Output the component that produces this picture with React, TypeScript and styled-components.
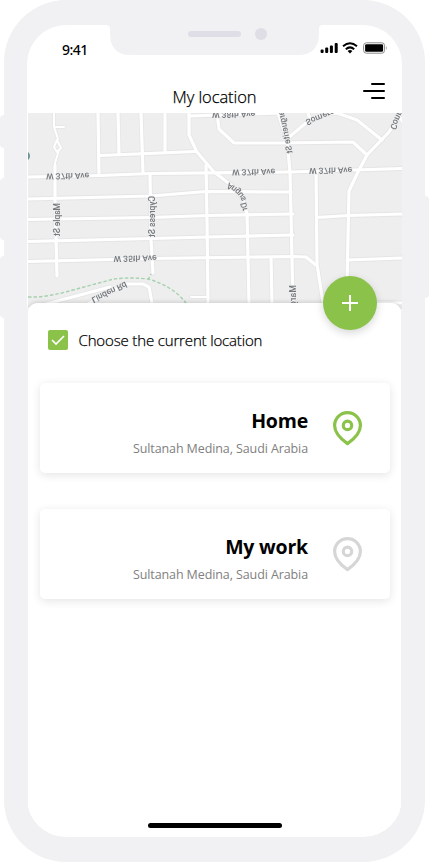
import React from "react";
import styled, { createGlobalStyle } from "styled-components";

const GREEN = "#8bc34a";
const SHELL = "#f1f1f4";

const GlobalStyle = createGlobalStyle`
  * { box-sizing: border-box; }
  body { margin: 0; background: #fff; overflow: hidden; }
  h1, h2, p { margin: 0; }
  button { border: 0; padding: 0; background: none; }
`;

const Page = styled.main`
  position: relative;
  width: 429px;
  height: 862px;
  padding: 0 4px;
  font-family: "Open Sans", "Noto Sans", sans-serif;
  color: #000;
`;

const SideKey = styled.span<{ $side: "left" | "right"; $top: number; $height: number }>`
  position: absolute;
  ${(p) => p.$side}: 0;
  top: ${(p) => p.$top}px;
  width: 8px;
  height: ${(p) => p.$height}px;
  border-radius: 4px;
  background: ${SHELL};
`;

const Shell = styled.div`
  position: relative;
  height: 862px;
  padding: 25px 23px;
  border-radius: 62px;
  background: ${SHELL};
`;

const Screen = styled.div`
  position: relative;
  display: flex;
  flex-direction: column;
  height: 812px;
  border-radius: 39px;
  background: #fff;
  overflow: hidden;
`;

const NotchArt = styled.svg`
  position: absolute;
  left: 79px;
  top: 0;
  display: block;
`;

const StatusBar = styled.div`
  display: flex;
  justify-content: space-between;
  height: 45px;
  padding: 14px 14px 0 35px;
`;

const Clock = styled.span`
  font-family: "Noto Sans", sans-serif;
  font-size: 14px;
  font-weight: 500;
  line-height: 21px;
  letter-spacing: -0.5px;
`;

const StatusIcons = styled.svg`
  display: block;
  margin-top: 2px;
`;

const Header = styled.header`
  display: grid;
  grid-template-columns: 40px 1fr 40px;
  height: 43px;
`;

const Title = styled.h1`
  grid-column: 2;
  padding-top: 15px;
  font-size: 16.5px;
  font-weight: 300;
  line-height: 24px;
  letter-spacing: -0.08px;
  text-align: center;
  -webkit-text-stroke: 0.25px #000;
`;

const MenuButton = styled.button`
  display: flex;
  flex-direction: column;
  align-items: flex-end;
  gap: 5px;
  padding: 13px 17px 0 0;
`;

const MenuLine = styled.span<{ $width: number }>`
  flex: none;
  width: ${(p) => p.$width}px;
  height: 2px;
  border-radius: 1px;
  background: #000;
`;

const MapArea = styled.div`
  height: 190px;
  padding-left: 1px;
`;

const MapArt = styled.svg`
  display: block;
  filter: blur(0.3px);
`;

const Sheet = styled.section`
  position: relative;
  flex: 1;
  margin: 0 1px;
  padding: 27px 11px 0 12px;
  border-radius: 9px 9px 0 0;
  background: #fff;
  box-shadow: 0 -1px 4px rgba(0, 0, 0, 0.14);
`;

const AddButton = styled.button`
  position: absolute;
  top: -27px;
  right: 24px;
  width: 54px;
  height: 54px;
  display: grid;
  place-items: center;
  border-radius: 50%;
  background: ${GREEN};
  box-shadow: 0 3px 8px rgba(0, 0, 0, 0.16);
`;

const CheckRow = styled.div`
  display: flex;
  align-items: center;
  gap: 10.5px;
  height: 20px;
  padding-left: 8px;
  margin-bottom: 33px;
`;

const CheckBox = styled.span`
  display: grid;
  place-items: center;
  width: 20px;
  height: 20px;
  border-radius: 2px;
  background: ${GREEN};
`;

const CheckLabel = styled.span`
  font-size: 15px;
  font-weight: 300;
  line-height: 20px;
  letter-spacing: -0.15px;
  white-space: nowrap;
  -webkit-text-stroke: 0.25px #000;
`;

const Card = styled.article`
  display: flex;
  justify-content: flex-end;
  gap: 24px;
  height: 90px;
  margin-bottom: 36px;
  padding: 0 27px 0 0;
  border-radius: 5px;
  background: #fff;
  box-shadow: 0 2px 10px rgba(0, 0, 0, 0.11);
`;

const CardText = styled.div`
  padding-top: 24px;
  text-align: right;
`;

const CardTitle = styled.h2`
  font-size: 19.5px;
  font-weight: 700;
  line-height: 28px;
  letter-spacing: -0.2px;
`;

const CardAddress = styled.p`
  margin-top: 5px;
  font-size: 12.5px;
  line-height: 18px;
  letter-spacing: -0.1px;
  color: #808080;
  white-space: nowrap;
`;

const PinArt = styled.svg`
  display: block;
  margin-top: 27px;
`;

const HomeIndicator = styled.span`
  position: absolute;
  left: 121px;
  bottom: 9px;
  width: 134px;
  height: 5px;
  border-radius: 3px;
  background: #000;
`;

const thinRoads = [
  "M54 113V127L58 139M54 127H64M57 140L54 147L57 152L61 148ZM59 150L55 163V170",
  "M191 297H208",
];

const roads = [
  "M28 177L100 175.5L150 173.5L290 172L402 168.5",
  "M28 199L151 196L206 191.5L291 192",
  "M28 219.5L151 217.5L208 215.5L293 214",
  "M28 241.5L151 238.5L208 237L293 235",
  "M28 261.5L151 258.5L293 256.5L306 257L317 266",
  "M55 165L55 200L57 276",
  "M98 113L99 175",
  "M118 113L119 153",
  "M141 113L143 173",
  "M100 155.5L160 153L195 151.5",
  "M150 174L151 240L153 273",
  "M165 113V151",
  "M189 113V135L197 152L214 172L231 185L243 200L247 214L249 303",
  "M189 116L279 113",
  "M217 113L219 129L234 143H280L353 142L367 155",
  "M206 165L207 220L208 303",
  "M271 258L272 303",
  "M278 113L287 140L290 172L291 215L293 303",
  "M289 137L306 123L325 114L337 113L357 120L382 140",
  "M308 113L310 120",
  "M401 113L389 132L367 155L357 174L349 191L347 285",
  "M397 113L403 122",
  "M316 171L317 264L323 303",
  "M317 217.5L348 215.5L402 214",
  "M347 260L402 258",
  "M370 303H402",
  "M28 309L65 299L110 287",
  "M88 304L126 284H143L149 287L152 303",
];

type MapLabel = { text: string; x: number; y: number; angle: number; length: number };

const mapLabels: MapLabel[] = [
  { text: "W 38th Ave", x: 212, y: 112, angle: -1, length: 43 },
  { text: "W 37th Ave", x: 46, y: 173.5, angle: -1, length: 43 },
  { text: "W 37th Ave", x: 232, y: 169.5, angle: -1, length: 43 },
  { text: "W 37th Ave", x: 309, y: 168, angle: -1, length: 43 },
  { text: "W 35th Ave", x: 113.5, y: 256, angle: -1, length: 43 },
  { text: "Maple St", x: 54, y: 203, angle: 90, length: 33 },
  { text: "Cypress St", x: 149, y: 196, angle: 90, length: 41 },
  { text: "Marg", x: 290, y: 285, angle: 90, length: 21 },
  { text: "Linden Rd", x: 91, y: 298, angle: -26, length: 38 },
  { text: "Somerset", x: 305, y: 120, angle: -22, length: 38 },
  { text: "Conn", x: 390, y: 128, angle: -66, length: 20 },
  { text: "Marguerite St", x: 282, y: 103, angle: 78, length: 51 },
].map((l) => (l.angle === 90 ? { ...l, x: l.x + 5.5 } : l));

const angusLetters = [
  { c: "A", x: 229, y: 182.5, angle: 32 },
  { c: "n", x: 233.5, y: 185, angle: 36 },
  { c: "g", x: 237.5, y: 188, angle: 42 },
  { c: "u", x: 241, y: 191.5, angle: 50 },
  { c: "s", x: 244, y: 195.5, angle: 58 },
  { c: "D", x: 246, y: 202, angle: 76 },
  { c: "r", x: 247, y: 207.5, angle: 82 },
];

function CityMap() {
  return (
    <MapArt width="375" height="196" viewBox="28 113 375 196">
      <rect x="28" y="113" width="375" height="196" fill="#eeeeee" />
      <g fill="none" strokeLinejoin="round" strokeLinecap="round">
        <g stroke="#e5e5e5">
          {thinRoads.map((d) => <path key={d} d={d} strokeWidth="3.4" />)}
          {roads.map((d) => <path key={d} d={d} strokeWidth="4.8" />)}
        </g>
        <g stroke="#fff">
          {thinRoads.map((d) => <path key={d} d={d} strokeWidth="2" />)}
          {roads.map((d) => <path key={d} d={d} strokeWidth="3.2" />)}
        </g>
        <path
          d="M28 297H39Q56 295 73 290Q95 284 114 279Q130 277 148 279Q173 286 186 303M148 280L151 274"
          stroke="#a5d1ae"
          strokeWidth="1.4"
          strokeDasharray="3.5 2"
          strokeLinecap="butt"
        />
      </g>
      <circle cx="25" cy="156" r="5" fill="#6e929c" />
      <g
        fontFamily="Roboto, sans-serif"
        fontSize="8.6"
        fontWeight="500"
        fill="#74797d"
        stroke="#eeeeee"
        strokeWidth="1.4"
        paintOrder="stroke"
      >
        {mapLabels.map((l) => (
          <text
            key={`${l.text}-${l.x}`}
            transform={`translate(${l.x} ${l.y}) rotate(${l.angle}) scale(1 -1)`}
            textLength={l.length}
          >
            {l.text}
          </text>
        ))}
        {angusLetters.map((l) => (
          <text key={l.c} transform={`translate(${l.x} ${l.y}) rotate(${l.angle}) scale(1 -1)`}>
            {l.c}
          </text>
        ))}
      </g>
    </MapArt>
  );
}

function Notch() {
  return (
    <NotchArt width="217" height="30" viewBox="0 0 217 30">
      <path d="M0 0Q4 0 4 4V8Q4 30 25 30H192Q213 30 213 8V4Q213 0 217 0Z" fill={SHELL} />
      <rect x="82" y="6" width="53" height="6" rx="3" fill="#dfdee6" />
      <circle cx="155" cy="9" r="6" fill="#dfdee6" />
    </NotchArt>
  );
}

function StatusGlyphs() {
  return (
    <StatusIcons width="68" height="13" viewBox="0 0 68 13">
      <rect x="0.6" y="8.5" width="3" height="3.5" rx="1" />
      <rect x="5.2" y="6.5" width="3" height="5.5" rx="1" />
      <rect x="9.9" y="4.5" width="3" height="7.5" rx="1" />
      <rect x="14.7" y="2" width="3" height="10" rx="1" />
      <g fill="none" stroke="#000" strokeWidth="2">
        <path d="M23 5.2Q30 -0.6 37 5.2" />
        <path d="M25.8 8.2Q30 4.6 34.2 8.2" />
      </g>
      <path d="M27.6 10Q30 8.2 32.4 10L30 12.6Z" />
      <rect x="43.6" y="1.8" width="21" height="10.4" rx="2.8" fill="none" stroke="#8a8a8a" />
      <rect x="45.1" y="3.2" width="18" height="7.6" rx="1.4" />
      <path d="M66 5Q67.4 6.9 66 8.9Z" fill="#8a8a8a" />
    </StatusIcons>
  );
}

function Pin({ color }: { color: string }) {
  return (
    <PinArt width="31" height="36" viewBox="0 0 31 36" fill="none" stroke={color} strokeWidth="3.2">
      <path d="M15.5 33.6C10 29.8 2.6 23.8 2.6 15.5A12.9 12.9 0 0 1 28.4 15.5C28.4 23.8 21 29.8 15.5 33.6Z" strokeLinejoin="round" />
      <circle cx="15.5" cy="15.4" r="4.2" />
    </PinArt>
  );
}

const places = [
  { name: "Home", address: "Sultanah Medina, Saudi Arabia", color: GREEN },
  { name: "My work", address: "Sultanah Medina, Saudi Arabia", color: "#d6d6d6" },
];

export default function App() {
  return (
    <>
      <GlobalStyle />
      <Page>
        <SideKey $side="left" $top={115} $height={33} />
        <SideKey $side="left" $top={178} $height={62} />
        <SideKey $side="left" $top={256} $height={62} />
        <SideKey $side="right" $top={196} $height={102} />
        <Shell>
          <Screen>
            <StatusBar>
              <Clock>9:41</Clock>
              <StatusGlyphs />
            </StatusBar>
            <Header>
              <Title>My location</Title>
              <MenuButton aria-label="Menu">
                <MenuLine $width={14} />
                <MenuLine $width={22} />
                <MenuLine $width={14} />
              </MenuButton>
            </Header>
            <MapArea>
              <CityMap />
            </MapArea>
            <Sheet>
              <AddButton aria-label="Add location">
                <svg width="16" height="16" viewBox="0 0 16 16" stroke="#fff" strokeWidth="2">
                  <path d="M8 0V16M0 8H16" />
                </svg>
              </AddButton>
              <CheckRow>
                <CheckBox>
                  <svg width="14" height="12" viewBox="0 0 14 12" fill="none" stroke="#fff" strokeWidth="1.7">
                    <path d="M1 6L5 10L13 2" />
                  </svg>
                </CheckBox>
                <CheckLabel>Choose the current location</CheckLabel>
              </CheckRow>
              {places.map((place) => (
                <Card key={place.name}>
                  <CardText>
                    <CardTitle>{place.name}</CardTitle>
                    <CardAddress>{place.address}</CardAddress>
                  </CardText>
                  <Pin color={place.color} />
                </Card>
              ))}
            </Sheet>
            <Notch />
            <HomeIndicator />
          </Screen>
        </Shell>
      </Page>
    </>
  );
}
